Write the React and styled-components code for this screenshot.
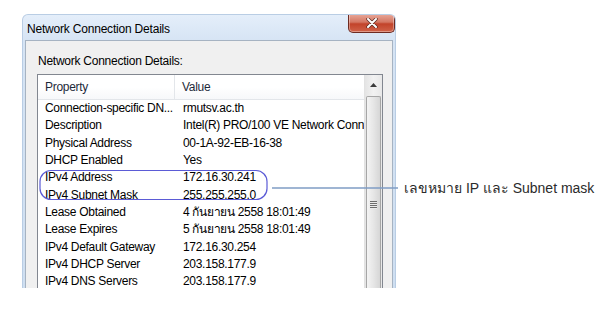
import React from 'react';
import styled, { createGlobalStyle } from 'styled-components';

const GlobalStyle = createGlobalStyle`
  html, body {
    margin: 0;
    padding: 0;
    background: #fff;
  }
  body {
    font-family: "Liberation Sans", "Noto Sans", sans-serif;
    font-size: 12px;
    color: #000;
  }
`;

const rows = [
  ['Connection-specific DN...', 'rmutsv.ac.th'],
  ['Description', 'Intel(R) PRO/100 VE Network Connection'],
  ['Physical Address', '00-1A-92-EB-16-38'],
  ['DHCP Enabled', 'Yes'],
  ['IPv4 Address', '172.16.30.241'],
  ['IPv4 Subnet Mask', '255.255.255.0'],
  ['Lease Obtained', '4 กันยายน 2558 18:01:49'],
  ['Lease Expires', '5 กันยายน 2558 18:01:49'],
  ['IPv4 Default Gateway', '172.16.30.254'],
  ['IPv4 DHCP Server', '203.158.177.9'],
  ['IPv4 DNS Servers', '203.158.177.9'],
];

const Page = styled.div`
  position: relative;
  width: 608px;
  height: 319px;
  padding: 14px 0 0 22px;
  box-sizing: border-box;
  overflow: hidden;
`;

const Window = styled.div`
  width: 374px;
  height: 274px;
  box-sizing: border-box;
  display: flex;
  flex-direction: column;
  border: 1px solid #b9cde4;
  border-bottom: none;
  border-radius: 6px 6px 0 0;
  background: linear-gradient(to bottom, #e4eefa 0px, #d6e4f4 26px, #cfdff1 100%);
  overflow: hidden;
`;

const TitleBar = styled.div`
  height: 25px;
  flex: none;
  display: flex;
  align-items: flex-start;
  justify-content: space-between;
  padding-left: 4px;
`;

const Title = styled.span`
  font-size: 12px;
  line-height: 12px;
  margin-top: 8px;
  letter-spacing: -0.2px;
  color: #000;
`;

const CloseButton = styled.div`
  width: 47px;
  height: 19px;
  margin-top: -1px;
  box-sizing: border-box;
  border: 1px solid #6d2b22;
  border-top: none;
  border-radius: 0 0 5px 5px;
  background: linear-gradient(to bottom, #e9a99b 0%, #d47763 45%, #c2432a 55%, #d0634a 100%);
  display: flex;
  align-items: center;
  justify-content: center;
  box-shadow: inset 0 0 0 1px rgba(255, 255, 255, 0.35);
`;

const Panel = styled.div`
  flex: 1;
  margin: 0 2px;
  border: 1px solid #a6b3c2;
  border-bottom: none;
  background: #f0f0f0;
  padding: 13px 9px 0 11px;
  display: flex;
  flex-direction: column;
`;

const Label = styled.div`
  line-height: 15px;
  padding-left: 1px;
  margin-bottom: 5px;
  letter-spacing: -0.25px;
`;

const ListBox = styled.div`
  flex: 1;
  border: 1px solid #828790;
  border-bottom: none;
  background: #fff;
  display: flex;
  overflow: hidden;
`;

const Table = styled.div`
  flex: 1;
  display: flex;
  flex-direction: column;
  overflow: hidden;
  letter-spacing: -0.3px;
`;

const HeaderRow = styled.div`
  height: 24px;
  flex: none;
  display: grid;
  grid-template-columns: 137px 1fr;
  background: linear-gradient(to bottom, #ffffff 0%, #ffffff 50%, #f7f8fa 100%);
  border-bottom: 1px solid #e3e6ea;
`;

const HeaderCell = styled.div`
  display: flex;
  align-items: center;
  padding-left: 7px;
  border-right: 1px solid #e3e6ea;
  color: #1e2a3a;
  &:last-child {
    border-right: none;
  }
`;

const Row = styled.div`
  height: 17.3px;
  flex: none;
  display: grid;
  grid-template-columns: 137px 1fr;
  align-items: center;
`;

const Cell = styled.div`
  padding-left: ${p => (p.$value ? '8px' : '7px')};
  white-space: nowrap;
  overflow: hidden;
  line-height: 17px;
`;

const ScrollBar = styled.div`
  width: 17px;
  flex: none;
  display: flex;
  flex-direction: column;
  background: linear-gradient(to right, #e4e4e4, #f2f2f2 50%, #e8e8e8);
  border-left: 1px solid #e2e2e2;
`;

const ArrowButton = styled.div`
  height: 19px;
  display: flex;
  align-items: center;
  justify-content: center;
`;

const Thumb = styled.div`
  flex: 1;
  margin: 2px 1px 0 1px;
  border: 1px solid #a6a6a6;
  border-bottom: none;
  border-radius: 2px 2px 0 0;
  background: linear-gradient(to right, #f4f4f4, #e6e6e6 50%, #d6d6d6);
  display: flex;
  justify-content: center;
  padding-top: 104px;
`;

const Grip = styled.div`
  width: 7px;
  height: 8px;
  background: repeating-linear-gradient(to bottom, #6e6e6e 0, #6e6e6e 1px, #ececec 1px, #ececec 2px);
`;

const Overlay = styled.svg`
  position: absolute;
  left: 0;
  top: 0;
  pointer-events: none;
`;

const Callout = styled.div`
  position: absolute;
  left: 404px;
  top: 179px;
  font-family: "Liberation Sans", "Noto Sans", "DejaVu Sans", sans-serif;
  font-size: 14px;
  line-height: 18px;
  color: #2b2b2b;
  white-space: nowrap;
`;

export default function App() {
  return (
    <>
      <GlobalStyle />
      <Page>
        <Window>
          <TitleBar>
            <Title>Network Connection Details</Title>
            <CloseButton>
              <svg width="12" height="10" viewBox="0 0 12 10">
                <path d="M2 1 L10 9 M10 1 L2 9" stroke="#5a2a22" strokeWidth="3.4" strokeLinecap="round" />
                <path d="M2 1 L10 9 M10 1 L2 9" stroke="#fff" strokeWidth="2" strokeLinecap="round" />
              </svg>
            </CloseButton>
          </TitleBar>
          <Panel>
            <Label>Network Connection Details:</Label>
            <ListBox>
              <Table>
                <HeaderRow>
                  <HeaderCell>Property</HeaderCell>
                  <HeaderCell>Value</HeaderCell>
                </HeaderRow>
                {rows.map(([k, v]) => (
                  <Row key={k}>
                    <Cell>{k}</Cell>
                    <Cell $value>{v}</Cell>
                  </Row>
                ))}
              </Table>
              <ScrollBar>
                <ArrowButton>
                  <svg width="7" height="4" viewBox="0 0 7 4">
                    <path d="M0 4 L3.5 0 L7 4 Z" fill="#3c3c3c" />
                  </svg>
                </ArrowButton>
                <Thumb>
                  <Grip />
                </Thumb>
              </ScrollBar>
            </ListBox>
          </Panel>
        </Window>
        <Overlay width="608" height="319">
          <rect x="40" y="170.5" width="227" height="29" rx="11" ry="11" fill="none" stroke="#5b5bd6" strokeWidth="1.2" />
          <line x1="272" y1="188" x2="398" y2="188" stroke="#7f9cc4" strokeWidth="1.5" />
        </Overlay>
        <Callout>เลขหมาย IP และ Subnet mask</Callout>
      </Page>
    </>
  );
}
